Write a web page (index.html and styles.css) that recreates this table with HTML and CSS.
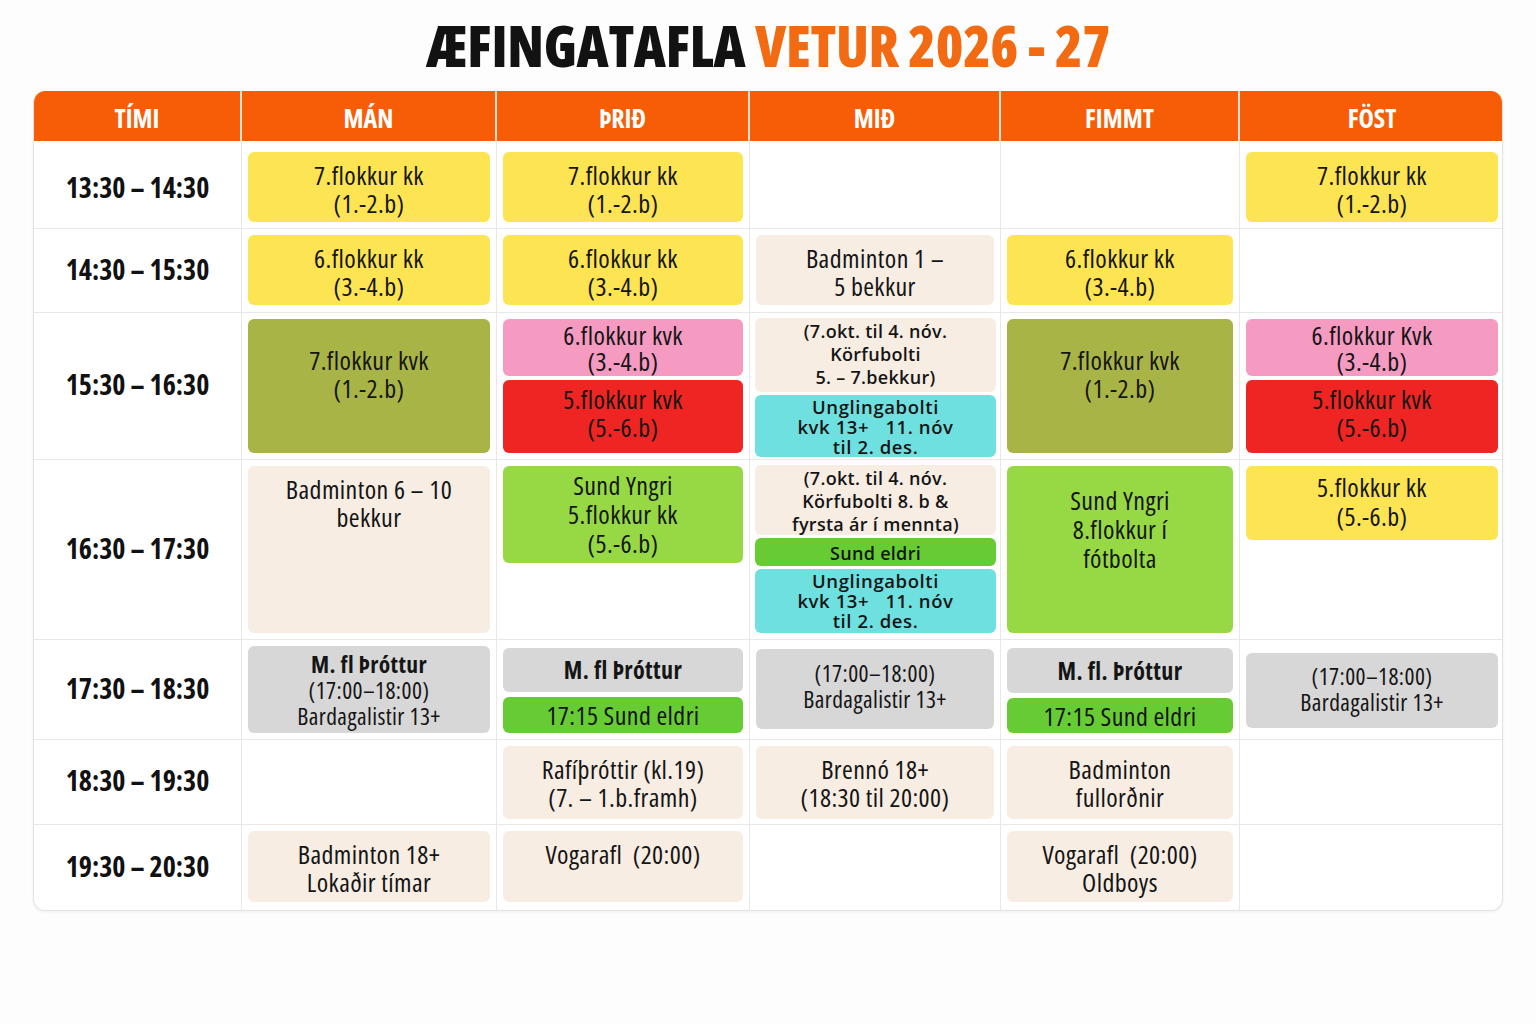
FILE: index.html
```html
<!DOCTYPE html>
<html lang="is">
<head>
<meta charset="utf-8">
<title>Æfingatafla vetur 2026 - 27</title>
<link rel="stylesheet" href="styles.css">
</head>
<body>
<header class="title"><span class="t-dark">ÆFINGATAFLA</span> <span class="t-orange">VETUR 2026 - 27</span></header>
<main class="table">
  <div class="hd">TÍMI</div><div class="hd">MÁN</div><div class="hd">ÞRIÐ</div><div class="hd">MIÐ</div><div class="hd">FIMMT</div><div class="hd">FÖST</div>

  <div class="cell time r1">13:30 – 14:30</div>
  <div class="cell r1"><div class="blk yellow h70">7.flokkur kk<br>(1.-2.b)</div></div>
  <div class="cell r1"><div class="blk yellow h70">7.flokkur kk<br>(1.-2.b)</div></div>
  <div class="cell r1"></div>
  <div class="cell r1"></div>
  <div class="cell r1 last"><div class="blk yellow h70">7.flokkur kk<br>(1.-2.b)</div></div>

  <div class="cell time">14:30 – 15:30</div>
  <div class="cell"><div class="blk yellow h70">6.flokkur kk<br>(3.-4.b)</div></div>
  <div class="cell"><div class="blk yellow h70">6.flokkur kk<br>(3.-4.b)</div></div>
  <div class="cell"><div class="blk beige h70">Badminton 1 –<br>5 bekkur</div></div>
  <div class="cell"><div class="blk yellow h70">6.flokkur kk<br>(3.-4.b)</div></div>
  <div class="cell last"></div>

  <div class="cell time">15:30 – 16:30</div>
  <div class="cell"><div class="blk olive fill pt-mid">7.flokkur kvk<br>(1.-2.b)</div></div>
  <div class="cell"><div class="blk pink h57 pink-t">6.flokkur kvk<br>(3.-4.b)</div><div class="blk red fill red-t">5.flokkur kvk<br>(5.-6.b)</div></div>
  <div class="cell tight"><div class="blk beige wide h74">(7.okt. til 4. nóv.<br>Körfubolti<br>5. – 7.bekkur)</div><div class="blk cyan wide2 fill">Unglingabolti<br>kvk 13+ &nbsp;&nbsp;11. nóv<br>til 2. des.</div></div>
  <div class="cell"><div class="blk olive fill pt-mid">7.flokkur kvk<br>(1.-2.b)</div></div>
  <div class="cell last"><div class="blk pink h57 pink-t">6.flokkur Kvk<br>(3.-4.b)</div><div class="blk red fill red-t">5.flokkur kvk<br>(5.-6.b)</div></div>

  <div class="cell time">16:30 – 17:30</div>
  <div class="cell"><div class="blk beige fill">Badminton 6 – 10<br>bekkur</div></div>
  <div class="cell"><div class="blk green h97 lh29 pt-5">Sund Yngri<br>5.flokkur kk<br>(5.-6.b)</div></div>
  <div class="cell tight"><div class="blk beige wide h70">(7.okt. til 4. nóv.<br>Körfubolti 8. b &amp;<br>fyrsta ár í mennta)</div><div class="blk green2 wide one h28">Sund eldri</div><div class="blk cyan wide2 fill">Unglingabolti<br>kvk 13+ &nbsp;&nbsp;11. nóv<br>til 2. des.</div></div>
  <div class="cell"><div class="blk green fill lh29 pt-big">Sund Yngri<br>8.flokkur í<br>fótbolta</div></div>
  <div class="cell last"><div class="blk yellow h74 lh29 pt-7">5.flokkur kk<br>(5.-6.b)</div></div>

  <div class="cell time">17:30 – 18:30</div>
  <div class="cell"><div class="blk grey h87 small pt-5"><b>M. fl Þróttur</b><br>(17:00–18:00)<br>Bardagalistir 13+</div></div>
  <div class="cell two"><div class="blk grey h44 one mid"><b>M. fl Þróttur</b></div><div class="blk green2 fill one">17:15 Sund eldri</div></div>
  <div class="cell"><div class="blk grey h80 small mt3 pt-m">(17:00–18:00)<br>Bardagalistir 13+</div></div>
  <div class="cell two"><div class="blk grey h45 one mid"><b>M. fl. Þróttur</b></div><div class="blk green2 fill one">17:15 Sund eldri</div></div>
  <div class="cell last"><div class="blk grey h75 small mt7 pt-10">(17:00–18:00)<br>Bardagalistir 13+</div></div>

  <div class="cell time">18:30 – 19:30</div>
  <div class="cell"></div>
  <div class="cell"><div class="blk beige h73">Rafíþróttir (kl.19)<br>(7. – 1.b.framh)</div></div>
  <div class="cell"><div class="blk beige h73">Brennó 18+<br>(18:30 til 20:00)</div></div>
  <div class="cell"><div class="blk beige h73">Badminton<br>fullorðnir</div></div>
  <div class="cell last"></div>

  <div class="cell time bottom">19:30 – 20:30</div>
  <div class="cell bottom"><div class="blk beige h71">Badminton 18+<br>Lokaðir tímar</div></div>
  <div class="cell bottom"><div class="blk beige h71">Vogarafl &nbsp;(20:00)</div></div>
  <div class="cell bottom"></div>
  <div class="cell bottom"><div class="blk beige h71">Vogarafl &nbsp;(20:00)<br>Oldboys</div></div>
  <div class="cell bottom last"></div>
</main>
</body>
</html>
```

FILE: styles.css
```css
* { box-sizing: border-box; }
html, body { margin: 0; padding: 0; background: #fdfdfd; }
body {
  width: 1536px;
  height: 1024px;
  font-family: "Open Sans", "DejaVu Sans Condensed", sans-serif;
  font-stretch: 75%;
  color: #151515;
}
.title {
  height: 91px;
  padding-top: 12px;
  text-align: center;
  font-size: 56px;
  font-weight: 800;
  line-height: 66px;
  letter-spacing: -0.3px;
}
.t-dark { color: #121212; }
.t-orange { color: #f26b12; }

.table {
  margin: 0 33px;
  width: 1470px;
  display: grid;
  grid-template-columns: 208px 255px 253px 251px 239px 264px;
  grid-template-rows: 50px 88px 84px 147px 180px 100px 85px 85px;
  border: 1px solid #e3e3e3;
  border-top: none;
  border-radius: 12px;
  overflow: hidden;
  background: #ffffff;
  box-shadow: 0 1px 3px rgba(0,0,0,0.06);
}
.hd {
  background: #f65d06;
  color: #ffffff;
  font-weight: 700;
  font-size: 26px;
  display: flex;
  align-items: center;
  justify-content: center;
  padding-top: 4px;
  border-right: 2px solid #fbe1d2;
}
.hd:nth-child(6) { border-right: none; }

.cell {
  border-right: 1px solid #e8e8e8;
  border-bottom: 1px solid #e8e8e8;
  padding: 6px 6px 6px 6px;
  display: flex;
  flex-direction: column;
  gap: 4px;
}
.cell.r1 { padding-top: 11px; }
.cell.last { border-right: none; }
.cell.bottom { border-bottom: none; }
.cell.tight { padding: 5px 4px 6px 5px; gap: 3px; }
.cell.two { gap: 5px; padding-top: 8px; }
.time {
  justify-content: center;
  align-items: center;
  font-weight: 700;
  font-size: 28px;
  padding-top: 2px;
  color: #111;
}

.blk {
  border-radius: 6px;
  text-align: center;
  font-size: 26px;
  font-weight: 500;
  letter-spacing: 0.4px;
  line-height: 28px;
  padding-top: 9px;
  flex: none;
}
.blk b { font-weight: 700; }
.fill { flex: 1; }
.one { display: flex; align-items: center; justify-content: center; padding-top: 0; }
.mid { font-size: 24px; }
.small { font-size: 23.5px; line-height: 26px; }
.lh29 { line-height: 29px; }
.pink-t { line-height: 26px; padding-top: 3px; }
.red-t { padding-top: 5px; }
.pt-5 { padding-top: 5px; }
.pt-7 { padding-top: 7px; }
.pt-10 { padding-top: 10px; }
.pt-m { padding-top: 11px; }
.pt-mid { padding-top: 27px; }
.pt-big { padding-top: 20px; }
.mt3 { margin-top: 3px; }
.mt7 { margin-top: 7px; }

.wide {
  font-stretch: 100%;
  font-weight: 600;
  font-size: 18px;
  line-height: 23px;
  letter-spacing: 0.3px;
  padding-top: 2px;
}
.wide2 {
  font-stretch: 100%;
  font-weight: 600;
  font-size: 18.5px;
  line-height: 20px;
  letter-spacing: 0.6px;
  padding-top: 2px;
}

.h28 { height: 28px; }
.h44 { height: 44px; }
.h45 { height: 45px; }
.h57 { height: 57px; }
.h70 { height: 70px; }
.h71 { height: 71px; }
.h73 { height: 73px; }
.h74 { height: 74px; }
.h75 { height: 75px; }
.h80 { height: 80px; }
.h87 { height: 87px; }
.h97 { height: 97px; }

.yellow { background: #fde453; }
.beige { background: #f7ede3; }
.olive { background: #a9b447; }
.pink { background: #f59bc2; }
.red { background: #ee2522; }
.cyan { background: #6fe0e0; }
.green { background: #97d944; }
.green2 { background: #67cc33; }
.grey { background: #d7d7d7; }
```
